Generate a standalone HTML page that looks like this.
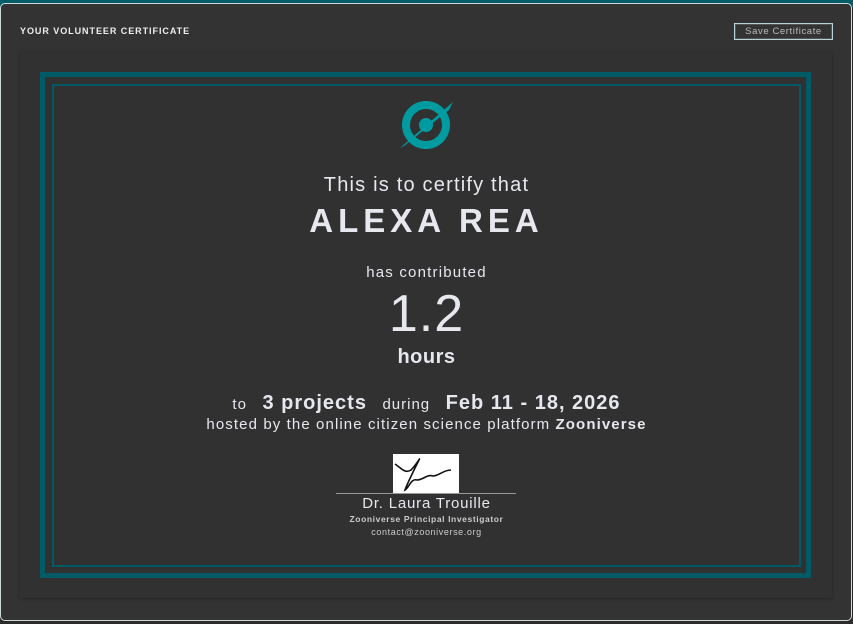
<!DOCTYPE html>
<html><head><meta charset="utf-8"><style>
html,body{margin:0;padding:0;width:853px;height:624px;overflow:hidden;background:#2b2b2b;font-family:"Liberation Sans",sans-serif}
.topstrip{position:absolute;left:0;top:0;width:853px;height:8px;background:#005c66}
.dlg{position:absolute;left:0;top:3px;width:850px;height:616px;background:#333;border:1px solid #cfd8d8;border-radius:5px}
.t{position:absolute;left:0;width:853px;text-align:center;color:#e6e8ee;white-space:nowrap}
</style></head><body>
<div class="topstrip"></div>
<div class="dlg"></div>
<div style="position:absolute;left:20px;top:26px;font-size:9px;font-weight:bold;color:#eee;letter-spacing:0.95px">YOUR VOLUNTEER CERTIFICATE</div>
<div style="position:absolute;left:734px;top:23px;width:97px;height:15px;border:1px solid #b8d4d4;box-shadow:inset 0 0 0 1px #555;color:#bbb;font-size:9.5px;line-height:15px;text-align:center;letter-spacing:0.6px">Save Certificate</div>
<div style="position:absolute;left:20px;top:52px;width:812px;height:546px;background:#313131;box-shadow:0 1px 3px rgba(0,0,0,0.3)"></div>
<div style="position:absolute;left:40px;top:72px;width:761px;height:496px;border:5px solid #005b66"></div>
<div style="position:absolute;left:52px;top:84px;width:745px;height:479px;border:2px solid #005b66"></div>
<svg style="position:absolute;left:398px;top:100px" width="56" height="50" viewBox="0 0 56 50">
<circle cx="28" cy="25" r="20" fill="none" stroke="#009ba0" stroke-width="8"/>
<circle cx="28" cy="25" r="7" fill="#009ba0"/>
<path d="M2 48 L55 2 L51 10 L6 46Z" fill="#009ba0"/>
</svg>
<div class="t" style="top:174px;font-size:20px;letter-spacing:1.2px">This is to certify that</div>
<div class="t" style="top:202px;font-size:33px;font-weight:bold;letter-spacing:5px">ALEXA REA</div>
<div class="t" style="top:264px;font-size:15px;letter-spacing:1.2px">has contributed</div>
<div class="t" style="top:284px;font-size:52px;letter-spacing:1px">1.2</div>
<div class="t" style="top:346px;font-size:20px;font-weight:bold;letter-spacing:0.5px">hours</div>
<div class="t" style="top:392px;font-size:15px;letter-spacing:1px"><span style="font-size:15px">to</span>&nbsp;&nbsp; <b style="font-size:20px">3 projects</b>&nbsp;&nbsp; <span style="font-size:15px">during</span>&nbsp;&nbsp; <b style="font-size:20px">Feb 11 - 18, 2026</b></div>
<div class="t" style="top:416px;font-size:15px;letter-spacing:1.1px">hosted by the online citizen science platform <b>Zooniverse</b></div>
<div style="position:absolute;left:393px;top:454px;width:66px;height:39px;background:#fff"></div>
<svg style="position:absolute;left:393px;top:454px" width="66" height="39" viewBox="0 0 66 39">
<path d="M2 10 C8 14 12 20 18 16 C24 10 28 2 26 6 C22 14 14 30 12 36 C16 34 18 24 24 26 C30 26 34 20 40 22 C46 22 50 16 58 16" fill="none" stroke="#111" stroke-width="1.6"/>
</svg>
<div style="position:absolute;left:336px;top:493px;width:180px;height:1px;background:#999"></div>
<div class="t" style="top:495px;font-size:15px;letter-spacing:0.8px">Dr. Laura Trouille</div>
<div class="t" style="top:514px;font-size:8.5px;color:#ccc;letter-spacing:0.6px;font-weight:bold">Zooniverse Principal Investigator</div>
<div class="t" style="top:527px;font-size:9px;color:#ccc;letter-spacing:0.6px">contact@zooniverse.org</div>
</body></html>
